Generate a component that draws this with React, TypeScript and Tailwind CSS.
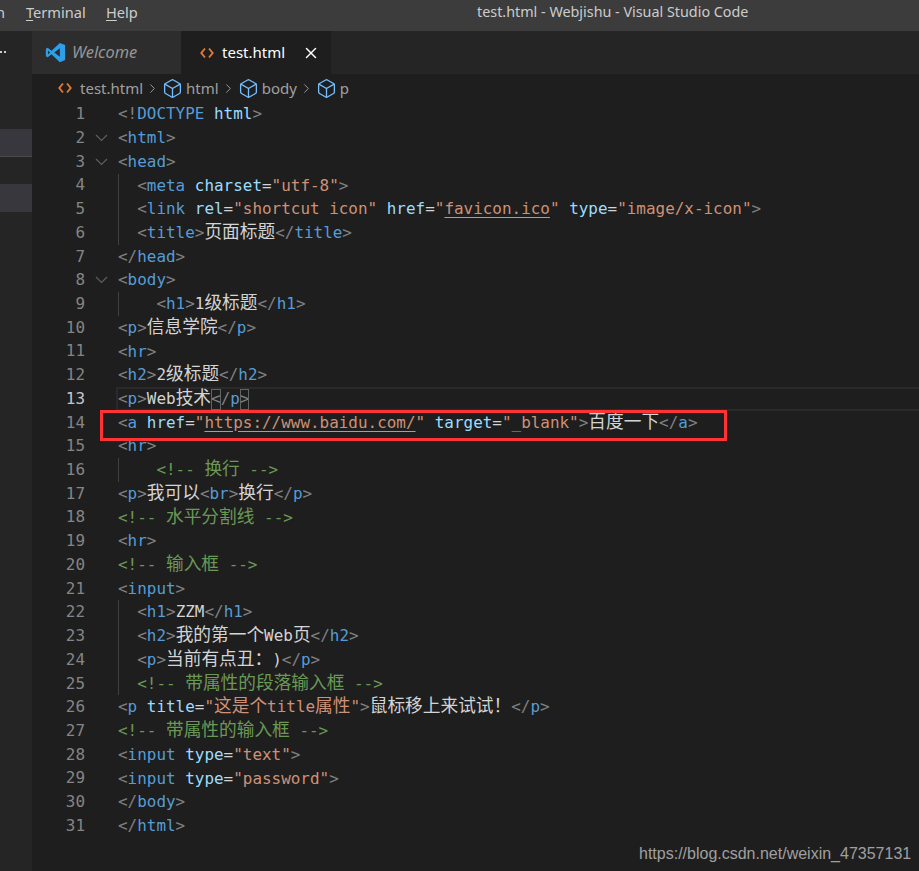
import { Box, ChevronRight, X } from "lucide-react";

type Tok = "p" | "k" | "a" | "s" | "u" | "t" | "c" | "bm";
type Seg = [Tok, string];
type Line = { n: number; indent?: 2 | 4; fold?: boolean; guide?: boolean; active?: boolean; segs: Seg[] };

const COLORS: Record<Tok, string> = {
  p: "text-[#808080]",
  k: "text-[#569cd6]",
  a: "text-[#9cdcfe]",
  s: "text-[#ce9178]",
  u: "text-[#ce9178] underline decoration-[#ce9178] underline-offset-[3px]",
  t: "text-[#d4d4d4]",
  c: "text-[#6a9955]",
  bm: "inline-block h-[21px] leading-[20px] text-[#808080] outline outline-1 -outline-offset-1 outline-[#5f665f]",
};

const tag = (name: string): Seg[] => [["p", "<"], ["k", name], ["p", ">"]];
const close = (name: string): Seg[] => [["p", "</"], ["k", name], ["p", ">"]];

const LINES: Line[] = [
  { n: 1, segs: [["p", "<!"], ["k", "DOCTYPE"], ["t", " "], ["a", "html"], ["p", ">"]] },
  { n: 2, fold: true, segs: tag("html") },
  { n: 3, fold: true, segs: tag("head") },
  { n: 4, indent: 2, guide: true, segs: [["p", "<"], ["k", "meta"], ["t", " "], ["a", "charset"], ["t", "="], ["s", '"utf-8"'], ["p", ">"]] },
  { n: 5, indent: 2, guide: true, segs: [["p", "<"], ["k", "link"], ["t", " "], ["a", "rel"], ["t", "="], ["s", '"shortcut icon"'], ["t", " "], ["a", "href"], ["t", "="], ["s", '"'], ["u", "favicon.ico"], ["s", '"'], ["t", " "], ["a", "type"], ["t", "="], ["s", '"image/x-icon"'], ["p", ">"]] },
  { n: 6, indent: 2, guide: true, segs: [...tag("title"), ["t", "页面标题"], ...close("title")] },
  { n: 7, segs: close("head") },
  { n: 8, fold: true, segs: tag("body") },
  { n: 9, indent: 4, guide: true, segs: [...tag("h1"), ["t", "1级标题"], ...close("h1")] },
  { n: 10, segs: [...tag("p"), ["t", "信息学院"], ...close("p")] },
  { n: 11, segs: tag("hr") },
  { n: 12, segs: [...tag("h2"), ["t", "2级标题"], ...close("h2")] },
  { n: 13, active: true, segs: [...tag("p"), ["t", "Web技术"], ["bm", "<"], ["p", "/"], ["k", "p"], ["bm", ">"]] },
  { n: 14, segs: [["p", "<"], ["k", "a"], ["t", " "], ["a", "href"], ["t", "="], ["s", '"'], ["u", "https://www.baidu.com/"], ["s", '"'], ["t", " "], ["a", "target"], ["t", "="], ["s", '"_blank"'], ["p", ">"], ["t", "百度一下"], ...close("a")] },
  { n: 15, segs: tag("hr") },
  { n: 16, indent: 4, guide: true, segs: [["c", "<!-- 换行 -->"]] },
  { n: 17, segs: [...tag("p"), ["t", "我可以"], ...tag("br"), ["t", "换行"], ...close("p")] },
  { n: 18, segs: [["c", "<!-- 水平分割线 -->"]] },
  { n: 19, segs: tag("hr") },
  { n: 20, segs: [["c", "<!-- 输入框 -->"]] },
  { n: 21, segs: tag("input") },
  { n: 22, indent: 2, guide: true, segs: [...tag("h1"), ["t", "ZZM"], ...close("h1")] },
  { n: 23, indent: 2, guide: true, segs: [...tag("h2"), ["t", "我的第一个Web页"], ...close("h2")] },
  { n: 24, indent: 2, guide: true, segs: [...tag("p"), ["t", "当前有点丑："], ["t", ")"], ...close("p")] },
  { n: 25, indent: 2, guide: true, segs: [["c", "<!-- 带属性的段落输入框 -->"]] },
  { n: 26, segs: [["p", "<"], ["k", "p"], ["t", " "], ["a", "title"], ["t", "="], ["s", '"这是个title属性"'], ["p", ">"], ["t", "鼠标移上来试试！"], ...close("p")] },
  { n: 27, segs: [["c", "<!-- 带属性的输入框 -->"]] },
  { n: 28, segs: [["p", "<"], ["k", "input"], ["t", " "], ["a", "type"], ["t", "="], ["s", '"text"'], ["p", ">"]] },
  { n: 29, segs: [["p", "<"], ["k", "input"], ["t", " "], ["a", "type"], ["t", "="], ["s", '"password"'], ["p", ">"]] },
  { n: 30, segs: close("body") },
  { n: 31, segs: close("html") },
];

// CJK glyphs are wider than the latin mono cell, so they get their own size
function Text({ value }: { value: string }) {
  const parts = value.split(/([\u3000-\u9fff\uff00-\uffef]+)/);
  return (
    <>
      {parts.map((part, i) =>
        i % 2 === 1 ? (
          <span key={i} lang="zh-CN" className="text-[17.7px] leading-[0] [text-spacing-trim:space-all] font-['Noto_Sans_CJK_SC',sans-serif]">
            {part}
          </span>
        ) : (
          part
        ),
      )}
    </>
  );
}

function CodeIcon({ className }: { className?: string }) {
  return (
    <svg viewBox="0 0 14 12" className={className} fill="none" stroke="#e37933" strokeWidth="1.9">
      <path d="M5 1.5 1.3 6 5 10.5" />
      <path d="M9 1.5 12.7 6 9 10.5" />
    </svg>
  );
}

function FoldIcon() {
  return (
    <svg viewBox="0 0 13 8" className="h-[8px] w-[13px]" fill="none" stroke="#5e5e5e" strokeWidth="1.2">
      <path d="M1 1 6.5 6.5 12 1" />
    </svg>
  );
}

function VsCodeLogo() {
  return (
    <svg viewBox="0 0 24 24" className="h-[21px] w-[21px]">
      <path d="M17 1 7.4 10 3.1 6.7 1 7.8v8.4l2.1 1.1L7.4 14l9.6 9 6-2.5V3.5zM17 7.2v9.6L10.6 12zM3.4 9.6 5.8 12l-2.4 2.4z" fill="#2f9fe8" />
    </svg>
  );
}

function Crumb({ label }: { label: string }) {
  return (
    <div className="flex items-center">
      <ChevronRight className="mx-[2px] h-[15px] w-[15px] text-[#a0a0a0]" strokeWidth={1.5} />
      <Box className="mr-[3px] h-[21px] w-[21px] text-[#75beff]" strokeWidth={1.5} />
      <span>{label}</span>
    </div>
  );
}

export default function App() {
  return (
    <div className="relative flex h-[871px] w-[919px] flex-col overflow-hidden bg-[#1e1e1e] font-['Noto_Sans',sans-serif]">
      <div className="relative flex h-[31px] shrink-0 items-center bg-[#3c3c3c] pb-[5px] text-[14.6px] text-[#cccccc]">
        <span className="-ml-[4px] w-[30px]">n</span>
        <span className="w-[80px]">
          <span className="underline underline-offset-2">T</span>erminal
        </span>
        <span>
          <span className="underline underline-offset-2">H</span>elp
        </span>
        <span className="absolute left-[477px] top-[1px] text-[14.35px]">test.html - Webjishu - Visual Studio Code</span>
      </div>

      <div className="flex min-h-0 flex-1">
        <aside className="flex w-[32px] shrink-0 flex-col bg-[#252526]">
          <div className="h-[43px] pt-[20px]">
            <div className="flex gap-[2px]">
              <span className="h-[2px] w-[2px] bg-[#cccccc]" />
              <span className="h-[2px] w-[2px] bg-[#cccccc]" />
            </div>
          </div>
          <div className="mt-[55px] h-[28px] border-b border-[#4a4a4a] bg-[#37373d]" />
          <div className="mt-[27px] h-[28px] bg-[#37373d]" />
        </aside>

        <main className="min-w-0 flex-1">
          <div className="flex h-[43px] bg-[#252526]">
            <div className="flex w-[149px] items-center bg-[#2d2d2d] pl-[13px] text-[16.4px] italic text-[#969696]">
              <VsCodeLogo />
              <span className="ml-[6px]">Welcome</span>
            </div>
            <div className="flex w-[150px] items-center bg-[#1e1e1e] pl-[19px] text-[15px] text-white">
              <CodeIcon className="h-[12px] w-[14px]" />
              <span className="ml-[8px]">test.html</span>
              <X className="ml-[17px] h-[18px] w-[18px] text-white" strokeWidth={2} />
            </div>
          </div>

          <div className="flex h-[28.4px] items-center pl-[26px] text-[15px] text-[#a0a0a0]">
            <CodeIcon className="mr-[8px] h-[12px] w-[14px]" />
            <span>test.html</span>
            <Crumb label="html" />
            <Crumb label="body" />
            <Crumb label="p" />
          </div>

          <div className="font-['DejaVu_Sans_Mono',monospace] text-[15.95px]">
            {LINES.map((line) => (
              <div key={line.n} className="flex h-[23.73px] items-center leading-none">
                <span className={line.active ? "w-[53px] text-right text-[#c6c6c6]" : "w-[53px] text-right text-[#858585]"}>
                  {line.n}
                </span>
                <span className="flex w-[33px] justify-center pr-[1px]">{line.fold && <FoldIcon />}</span>
                <div
                  className={
                    line.active
                      ? "relative h-full min-w-0 flex-1 whitespace-pre border-2 border-r-0 border-[#2a2a2a] leading-[19.7px] -ml-[2px]"
                      : "relative h-full min-w-0 flex-1 whitespace-pre leading-[23.73px]"
                  }
                >
                  {line.guide && <span className="absolute left-0 top-0 h-full w-px bg-[#404040]" />}
                  {line.indent === 2 && "  "}
                  {line.indent === 4 && "    "}
                  {line.segs.map((seg, i) => (
                    <span key={i} className={COLORS[seg[0]]}>
                      <Text value={seg[1]} />
                    </span>
                  ))}
                </div>
              </div>
            ))}
          </div>
        </main>
      </div>

      <div className="absolute left-[100px] top-[410px] h-[31px] w-[627px] border-[3px] border-[#ff3333]" />
      <span className="absolute left-[639px] top-[842px] font-['Liberation_Sans',sans-serif] text-[16px] text-[#a0a0a0]">
        https://blog.csdn.net/weixin_47357131
      </span>
    </div>
  );
}
